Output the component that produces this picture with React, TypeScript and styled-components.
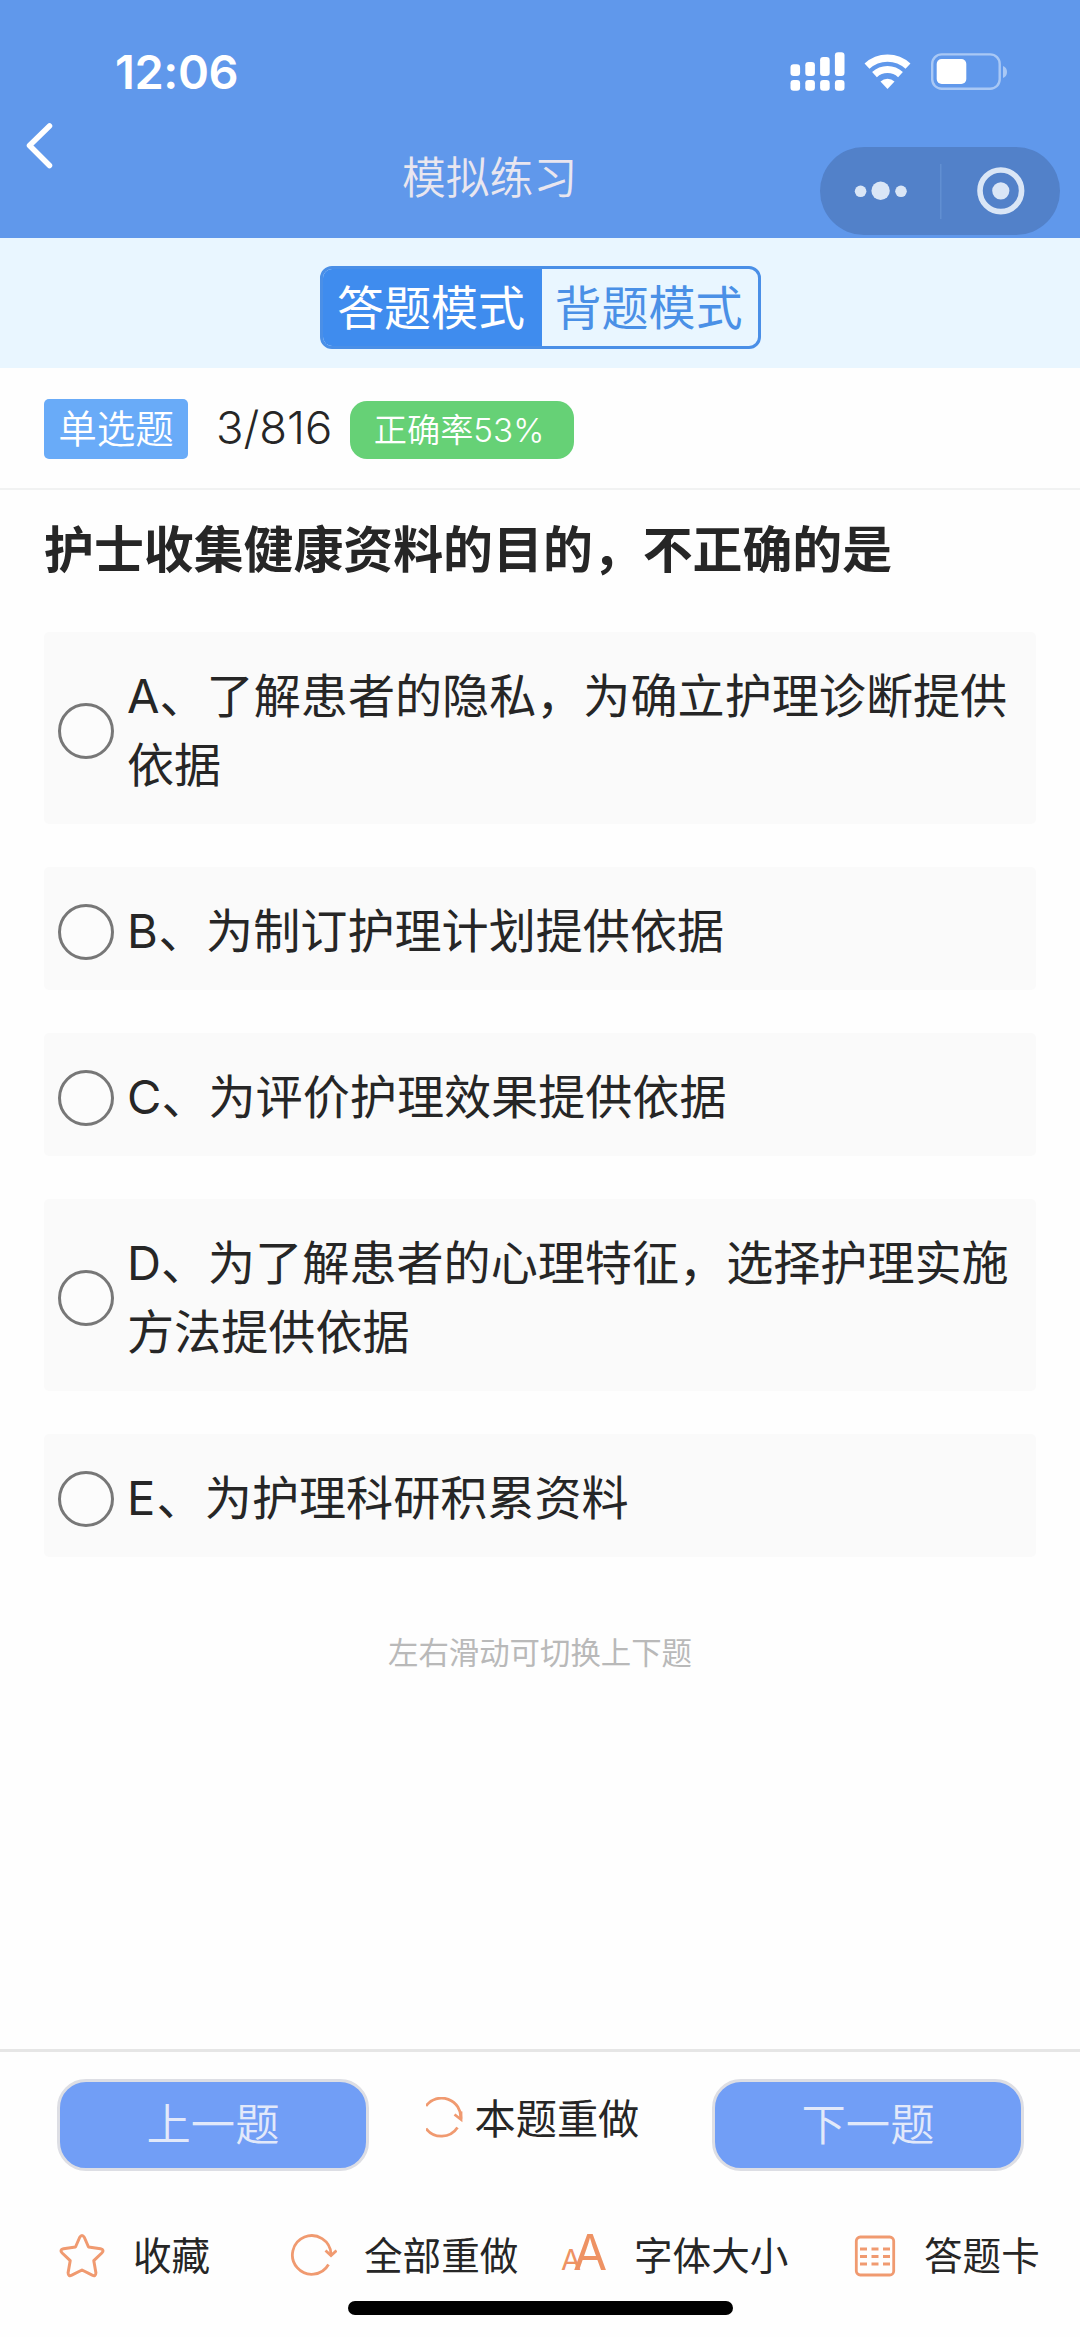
import React from "react";
import styled, { createGlobalStyle } from "styled-components";

const Global = createGlobalStyle`
  *, *::before, *::after { box-sizing: border-box; }
  body { margin: 0; background: #fff; }
`;

const Page = styled.div`
  width: 1080px;
  height: 2337px;
  display: flex;
  flex-direction: column;
  background: #fefefe;
  color: #262626;
  font-family: Inter, "Noto Sans CJK SC", sans-serif;
  overflow: hidden;
`;

const Header = styled.header`
  height: 238px;
  flex: none;
  display: flex;
  flex-direction: column;
  background: #6098eb;
`;

const StatusBar = styled.div`
  height: 104px;
  padding: 38px 72px 0 115px;
  display: flex;
  justify-content: space-between;
  align-items: flex-start;
`;

const Clock = styled.span`
  color: #fff;
  font-size: 47px;
  font-weight: 600;
  line-height: 68px;
  letter-spacing: -0.4px;
`;

const StatusIcons = styled.svg`
  display: block;
  margin-top: 12px;
`;

const NavBar = styled.div`
  display: grid;
  grid-template-columns: 402px 1fr 240px;
  padding-right: 20px;
  height: 134px;
`;

const BackButton = styled.button`
  width: 60px;
  height: 60px;
  margin: 11px 0 0 19px;
  padding: 0;
  border: 0;
  background: none;
`;

const NavTitle = styled.h1`
  margin: 43px 0 0;
  font-size: 43.8px;
  line-height: 64px;
  font-weight: 350;
  color: #e9e6ef;
`;

const Capsule = styled.div`
  height: 88px;
  margin-top: 43px;
  border-radius: 44px;
  background: #5281c9;
`;

const ModeBar = styled.div`
  height: 130px;
  flex: none;
  display: flex;
  justify-content: center;
  padding-top: 28px;
  background: #e9f6ff;
`;

const ModeSwitch = styled.div`
  display: grid;
  grid-template-columns: 219px 1fr;
  width: 441px;
  height: 83px;
  border: 3px solid #4a8fe7;
  border-radius: 12px;
  overflow: hidden;
`;

const Mode = styled.button<{ $active?: boolean }>`
  padding: 0 2px 0 0;
  border: 0;
  font: 400 47px/74px Inter, "Noto Sans CJK SC", sans-serif;
  color: ${(p) => (p.$active ? "#fff" : "#4a90e6")};
  background: ${(p) => (p.$active ? "#3f8cee" : "transparent")};
`;

const MetaRow = styled.div`
  height: 122px;
  flex: none;
  display: flex;
  align-items: flex-start;
  padding: 31px 0 0 44px;
  border-bottom: 2px solid #f1f2f2;
`;

const TypeTag = styled.span`
  width: 144px;
  height: 60px;
  border-radius: 5px;
  background: #69abf8;
  color: #fff;
  font-size: 38.6px;
  font-weight: 350;
  line-height: 60px;
  text-align: center;
`;

const Progress = styled.span`
  width: 119px;
  margin: 0 15px 0 28px;
  font-size: 45.4px;
  line-height: 58px;
  font-weight: 360;
  white-space: nowrap;
`;

const RateTag = styled.span`
  width: 224px;
  height: 58px;
  margin-top: 2px;
  border-radius: 17px;
  background: #66d176;
  color: #fff;
  font-size: 33.2px;
  font-weight: 350;
  line-height: 59px;
  text-align: center;
  padding-right: 6px;
`;

const Content = styled.main`
  flex: 1;
  padding: 20px 44px 0;
`;

const Question = styled.h2`
  margin: 0 0 42px;
  font-size: 49.9px;
  line-height: 80px;
  font-weight: 700;
`;

const OptionList = styled.div`
  display: flex;
  flex-direction: column;
  gap: 43px;
`;

const Option = styled.label`
  display: flex;
  align-items: center;
  padding: 29px 20px 25px 14px;
  background: #fafafa;
  border-radius: 5px;
`;

const Radio = styled.span`
  flex: none;
  width: 56px;
  height: 56px;
  margin: 2px 13px 0 0;
  border: 3px solid #777;
  border-radius: 50%;
  background: #fcfcfc;
`;

const OptionText = styled.span<{ $tracking: number }>`
  font-size: 47.1px;
  line-height: 69px;
  white-space: pre-line;

  &::first-letter {
    letter-spacing: ${(p) => p.$tracking}px;
  }
`;

const Hint = styled.p`
  margin: 73px 0 0;
  text-align: center;
  font-size: 30.4px;
  line-height: 46px;
  color: #b9b9b9;
`;

const Footer = styled.footer`
  height: 288px;
  flex: none;
  border-top: 3px solid #e6e6e6;
  display: flex;
  flex-direction: column;
`;

const PagerRow = styled.div`
  display: flex;
  justify-content: space-between;
  padding: 27px 56px 0 57px;
`;

const PagerButton = styled.button`
  width: 312px;
  height: 92px;
  padding: 0;
  border: 3px solid #dddee4;
  border-radius: 29px;
  background: #719ef6;
  color: #e2e9fa;
  font: 350 44.3px/84px Inter, "Noto Sans CJK SC", sans-serif;
`;

const RedoButton = styled.div`
  display: flex;
  align-items: flex-start;
  width: 230px;
  gap: 12px;
  margin-top: 10px;
  font-size: 41.2px;
  line-height: 60px;
  white-space: nowrap;

  svg { flex: none; margin-top: 8px; }
`;

const ToolRow = styled.div`
  display: grid;
  grid-template-columns: 232px 272px 292px 1fr;
  padding: 55px 0 0 57px;
`;

const Tool = styled.div<{ $gap: number }>`
  display: flex;
  align-items: center;
  gap: ${(p) => p.$gap}px;
  height: 60px;
  font-size: 38.6px;
  line-height: 60px;
  white-space: nowrap;

  svg { flex: none; display: block; }
`;

const FontSizeIcon = styled.span`
  display: block;
  width: 46px;
  color: #ee9263;
  font-size: 49.5px;
  line-height: 60px;

  &::first-letter {
    font-size: 29px;
    letter-spacing: -8px;
  }
`;

const HomeIndicator = styled.div`
  width: 385px;
  height: 14px;
  margin: 15px auto 0;
  border-radius: 7px;
  background: #000;
`;

const orange = "#f09a70";

const options = [
  { text: "A、了解患者的隐私，为确立护理诊断提供\n依据", tracking: 0 },
  { text: "B、为制订护理计划提供依据", tracking: 0.6 },
  { text: "C、为评价护理效果提供依据", tracking: 0 },
  { text: "D、为了解患者的心理特征，选择护理实施\n方法提供依据", tracking: 0 },
  { text: "E、为护理科研积累资料", tracking: 1.2 },
];

const SIGNAL = [
  [0.5, 14.3],
  [15.3, 12],
  [30.1, 7],
  [44.9, 2.3],
];

export default function App() {
  return (
    <Page>
      <Global />
      <Header>
        <StatusBar>
          <Clock>12:06</Clock>
          <StatusIcons width="218" height="44" viewBox="0 0 218 44" fill="#fff">
            {SIGNAL.map(([x, y]) => (
              <g key={x}>
                <rect x={x} y={y} width="9.6" height={26 - y} rx="3.2" />
                <rect x={x} y="30" width="9.6" height="10.7" rx="3.2" />
              </g>
            ))}
            <g fill="none" stroke="#fff">
              <path d="M77 16.2a30 30 0 0 1 41 0" strokeWidth="7.2" />
              <path d="M84.5 24.6a19 19 0 0 1 26 0" strokeWidth="7" />
            </g>
            <path d="M97.5 39l-7-7.6a10.5 10.5 0 0 1 14 0z" />
            <rect x="142.2" y="4.4" width="67.5" height="34.4" rx="9.5" fill="none" stroke="#a9c8f5" strokeWidth="2.4" />
            <rect x="146.7" y="9" width="29.6" height="25" rx="5" />
            <path d="M213 16q4 1.5 4 6t-4 6z" fill="#a9c8f5" />
          </StatusIcons>
        </StatusBar>
        <NavBar>
          <BackButton aria-label="back">
            <svg width="60" height="60" fill="none" stroke="#fff" strokeWidth="5.5" strokeLinecap="round" strokeLinejoin="round">
              <path d="M30.5 11L10.5 30.5L30.5 50.5" />
            </svg>
          </BackButton>
          <NavTitle>模拟练习</NavTitle>
          <Capsule>
            <svg width="240" height="88" fill="#dae6f6">
              <circle cx="40.6" cy="44.3" r="5.8" />
              <circle cx="60.6" cy="43.8" r="9.2" />
              <circle cx="81" cy="44.3" r="5.8" />
              <rect x="120" y="17" width="1.5" height="55" fill="#618fd2" />
              <circle cx="180.8" cy="43.8" r="20.8" fill="none" stroke="#dae6f6" strokeWidth="5.6" />
              <circle cx="180.8" cy="43.8" r="8.6" />
            </svg>
          </Capsule>
        </NavBar>
      </Header>
      <ModeBar>
        <ModeSwitch>
          <Mode $active>答题模式</Mode>
          <Mode>背题模式</Mode>
        </ModeSwitch>
      </ModeBar>
      <MetaRow>
        <TypeTag>单选题</TypeTag>
        <Progress>3/816</Progress>
        <RateTag>正确率53%</RateTag>
      </MetaRow>
      <Content>
        <Question>护士收集健康资料的目的，不正确的是</Question>
        <OptionList>
          {options.map(({ text, tracking }) => (
            <Option key={text}>
              <Radio />
              <OptionText $tracking={tracking}>{text}</OptionText>
            </Option>
          ))}
        </OptionList>
        <Hint>左右滑动可切换上下题</Hint>
      </Content>
      <Footer>
        <PagerRow>
          <PagerButton>上一题</PagerButton>
          <RedoButton>
            <svg width="37" height="42" fill="none" stroke={orange} strokeWidth="2.8">
              <path d="M0 9A19.3 19.3 0 0 1 34.8 22M0 31.5A19.3 19.3 0 0 0 31.5 30.5" />
              <path d="M28.5 17.5L35 22.5V14.5" />
            </svg>
            本题重做
          </RedoButton>
          <PagerButton>下一题</PagerButton>
        </PagerRow>
        <ToolRow>
          <Tool $gap={28}>
            <svg width="48" height="48" fill="none" stroke={orange} strokeWidth="3" strokeLinejoin="round">
              <path d="M22.6 5.5Q25 1.6 27.4 5.5L31.5 15L43.5 16.7Q47.8 17.8 44.8 21L36.8 28.7L38.9 40.8Q38.8 44.8 35.2 43.2L25 38L14.8 43.2Q11.2 44.8 11.1 40.8L13.2 28.7L5.2 21Q2.2 17.8 6.5 16.7L18.5 15Z" />
            </svg>
            收藏
          </Tool>
          <Tool $gap={27}>
            <svg width="48" height="48" fill="none" stroke={orange} strokeWidth="2.8">
              <path d="M39.5 32.5A19.3 19.3 0 1 1 42 22" />
              <path d="M36.5 18.5L42 23.5L47.5 18.5" />
            </svg>
            全部重做
          </Tool>
          <Tool $gap={27}>
            <FontSizeIcon>AA</FontSizeIcon>
            字体大小
          </Tool>
          <Tool $gap={27}>
            <svg width="44" height="48" fill="none" stroke={orange} strokeWidth="2.8">
              <rect x="3.3" y="5" width="37.4" height="38" rx="4" />
              <path d="M7 17h7M18.5 17h7M30 17h7M7 24.5h7M18.5 24.5h7M30 24.5h7M7 32h7M18.5 32h7M30 32h7" />
            </svg>
            答题卡
          </Tool>
        </ToolRow>
        <HomeIndicator />
      </Footer>
    </Page>
  );
}
